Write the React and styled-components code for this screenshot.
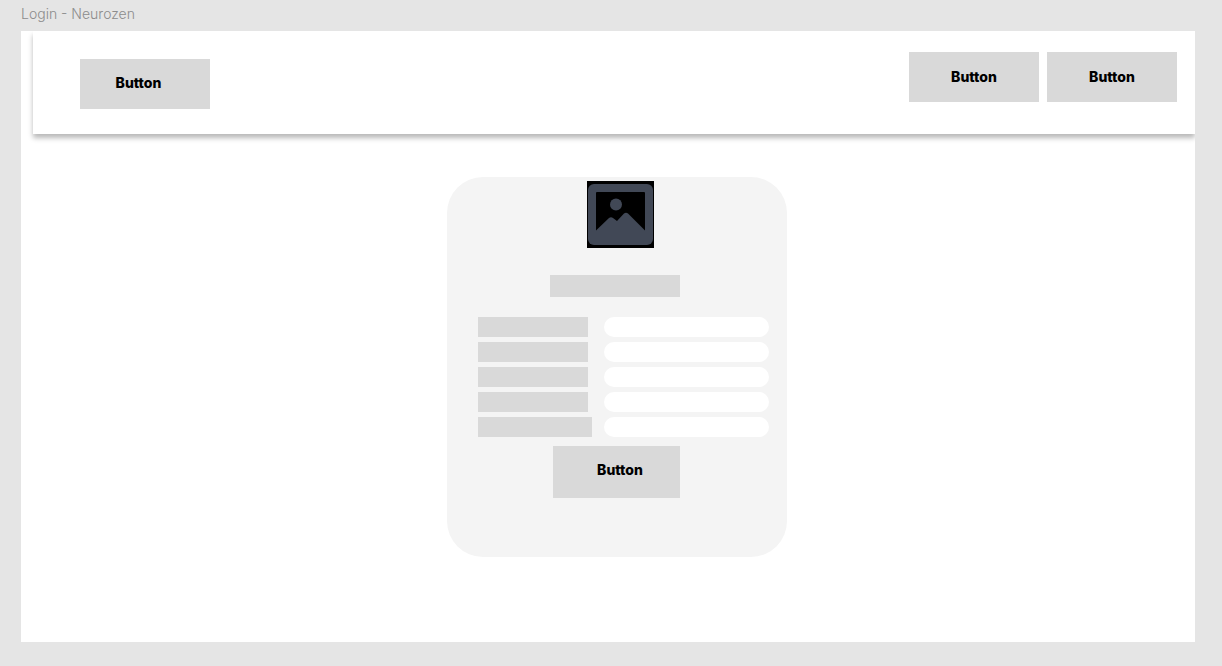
import React from "react";
import styled, { createGlobalStyle } from "styled-components";

const GlobalStyle = createGlobalStyle`
  *, *::before, *::after { box-sizing: border-box; }
  body {
    margin: 0;
    background: #e5e5e5;
    font-family: Inter, "Liberation Sans", sans-serif;
  }
`;

const Canvas = styled.div`
  display: flex;
  flex-direction: column;
  min-height: 100vh;
  padding: 0 27px 24px 21px;
`;

const FrameTitle = styled.h1`
  margin: 0;
  padding: 4px 0 7px;
  font-size: 14px;
  line-height: 20px;
  font-weight: 300;
  color: #8c8c8c;
`;

const Frame = styled.div`
  flex: 1;
  background: #ffffff;
  overflow: hidden;
`;

const NavBar = styled.header`
  display: flex;
  justify-content: space-between;
  align-items: flex-start;
  margin-left: 12px;
  padding: 21px 18px 25px 47px;
  background: #ffffff;
  box-shadow: 0 4px 5px rgba(0, 0, 0, 0.28);
`;

const NavStart = styled.div`
  padding-top: 7px;
`;

const NavActions = styled.nav`
  display: flex;
  gap: 8px;
`;

const Button = styled.button`
  width: ${({ $size }) => ($size === "large" ? "127px" : "130px")};
  height: ${({ $size }) => ($size === "large" ? "52px" : "50px")};
  padding: ${({ $padding }) => $padding || "0"};
  border: 0;
  background: #d9d9d9;
  color: #000000;
  font-family: inherit;
  font-size: 14px;
  line-height: 20px;
  font-weight: 800;
  text-align: center;
  cursor: pointer;
`;

const Main = styled.main`
  display: flex;
  justify-content: center;
  padding: 43px 0 43px 18px;
`;

const Card = styled.form`
  display: flex;
  flex-direction: column;
  align-items: center;
  width: 340px;
  padding: 4px 18px 59px 31px;
  border-radius: 36px;
  background: #f4f4f4;
`;

const Picture = styled.svg`
  display: block;
  width: 67px;
  height: 67px;
  margin-right: 6px;
`;

const Heading = styled.div`
  width: 130px;
  height: 22px;
  margin: 27px 17px 20px 0;
  background: #d9d9d9;
`;

const Fields = styled.div`
  display: flex;
  flex-direction: column;
  gap: 5px;
  width: 100%;
  margin-bottom: 9px;
`;

const Field = styled.div`
  display: grid;
  grid-template-columns: 114px 1fr;
  column-gap: 12px;
`;

const Label = styled.label`
  width: ${({ $wide }) => ($wide ? "114px" : "110px")};
  height: 20px;
  background: #d9d9d9;
`;

const Input = styled.input`
  width: 100%;
  height: 20px;
  padding: 0 10px;
  border: 0;
  border-radius: 10px;
  background: #ffffff;
  font-family: inherit;
  font-size: 14px;
`;

const Submit = styled.div`
  padding-right: 14px;
`;

const fields = [
  { id: "field-1" },
  { id: "field-2" },
  { id: "field-3" },
  { id: "field-4" },
  { id: "field-5", wide: true },
];

function PictureIcon() {
  return (
    <Picture viewBox="0 0 67 67" aria-hidden="true">
      <rect width="67" height="67" fill="#000000" />
      <rect x="1" y="3" width="65" height="61" rx="6" fill="#414856" />
      <path
        d="M10 11H57Q58 11 58 12V49.500L41 32.500Q39 31 37 32.500L30 40L26 37Q24 35.500 22 37L9 49.500V12Q9 11 10 11Z"
        fill="#000000"
      />
      <circle cx="29" cy="23.500" r="6" fill="#414856" />
    </Picture>
  );
}

export default function App() {
  return (
    <>
      <GlobalStyle />
      <Canvas>
        <FrameTitle>Login - Neurozen</FrameTitle>
        <Frame>
          <NavBar>
            <NavStart>
              <Button type="button" $padding="0 13px 2px 0">Button</Button>
            </NavStart>
            <NavActions>
              <Button type="button">Button</Button>
              <Button type="button">Button</Button>
            </NavActions>
          </NavBar>
          <Main>
            <Card onSubmit={(event) => event.preventDefault()}>
              <PictureIcon />
              <Heading />
              <Fields>
                {fields.map(({ id, wide }, index) => (
                  <Field key={id}>
                    <Label htmlFor={id} $wide={wide} />
                    <Input id={id} type="text" aria-label={`Field ${index + 1}`} />
                  </Field>
                ))}
              </Fields>
              <Submit>
                <Button type="submit" $size="large" $padding="0 0 4px 7px">Button</Button>
              </Submit>
            </Card>
          </Main>
        </Frame>
      </Canvas>
    </>
  );
}
